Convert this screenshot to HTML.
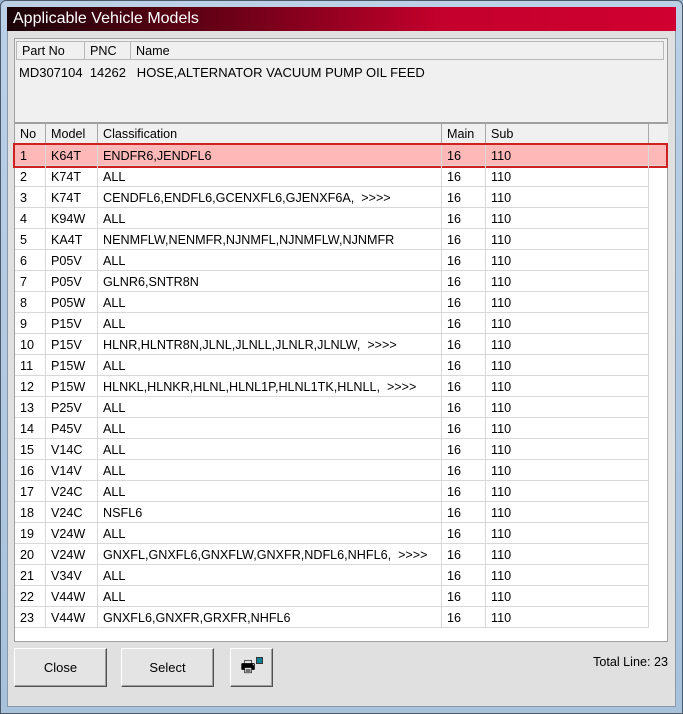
<!DOCTYPE html><html><head><style>
*{margin:0;padding:0;box-sizing:border-box}
body{width:683px;height:714px;background:#9fb8d2;position:relative;font-family:"Liberation Sans",sans-serif;font-size:12.6px;color:#000;overflow:hidden}
.frame{position:absolute;left:0;top:0;width:683px;height:714px;border-radius:6px 6px 0 0;background:linear-gradient(#bcd0e6,#a8c2dc);border:1px solid #4a5a6a}
.in{position:absolute;left:7px;top:30px;width:669px;height:677px;background:#e0e0e0;border:1px solid #8899aa}
.title{position:absolute;left:7px;top:7px;width:669px;height:24px;background:linear-gradient(90deg,#1a0508 0%,#700018 35%,#c4002c 65%,#d00030 100%);color:#fff;font-size:16px;padding:3px 6px}
.box1{position:absolute;left:14px;top:38px;width:654px;height:85px;background:#f0f0f0;border:1px solid #a0a0a0}
.h{position:absolute;top:2px;height:19px;background:#f0f0f0;border:1px solid #b8b8b8;border-left:none;padding:2px 5px}
.tbl{position:absolute;left:14px;top:123px;width:654px;height:519px;background:#fff;border:1px solid #a0a0a0}
.hr{position:absolute;top:0;height:21px;background:#f0f0f0;border-right:1px solid #a8a8a8;border-bottom:1px solid #a8a8a8;padding:3px 5px}
.row{position:absolute;left:0;width:633px;height:21px;border-bottom:1px solid #d8d8d8}
.row span{position:absolute;top:0;height:21px;padding:4px 5px;border-right:1px solid #d8d8d8;white-space:nowrap}
.sel{background:#ffb8b8;outline:2px solid #d02020;width:651px}
.btn{position:absolute;top:648px;height:39px;background:#e4e4e4;border:1px solid;border-color:#fff #505050 #505050 #fff;box-shadow:inset -1px -1px #a0a0a0;text-align:center;line-height:37px;font-size:13px}
</style></head><body>
<div class="frame"></div>
<div class="in"></div>
<div class="title">Applicable Vehicle Models</div>
<div class="box1">
<div class="h" style="left:1px;width:69px;border-left:1px solid #b8b8b8">Part No</div>
<div class="h" style="left:70px;width:46px">PNC</div>
<div class="h" style="left:116px;width:533px">Name</div>
<div style="position:absolute;top:26px;left:4px;font-size:13px">MD307104&nbsp;&nbsp;14262&nbsp;&nbsp;&nbsp;HOSE,ALTERNATOR VACUUM PUMP OIL FEED</div>
</div>
<div class="tbl">
<div class="hr" style="left:0;width:31px">No</div>
<div class="hr" style="left:31px;width:52px">Model</div>
<div class="hr" style="left:83px;width:344px">Classification</div>
<div class="hr" style="left:427px;width:44px">Main</div>
<div class="hr" style="left:471px;width:163px">Sub</div>
<div class="hr" style="left:634px;width:19px;border-right:none"></div>
<div id="rows"></div>
</div>
<div class="btn" style="left:14px;width:93px">Close</div>
<div class="btn" style="left:121px;width:93px">Select</div>
<div class="btn" style="left:230px;width:43px;font-size:16px">🖶<span style="display:inline-block;width:7px;height:7px;background:#0a8090;border:1px solid #333;vertical-align:8px"></span></div>
<div style="position:absolute;left:540px;top:655px;width:128px;text-align:right">Total Line: 23</div>
<script>
var d=[["K64T","ENDFR6,JENDFL6"],["K74T","ALL"],["K74T","CENDFL6,ENDFL6,GCENXFL6,GJENXF6A,&nbsp; &gt;&gt;&gt;&gt;"],["K94W","ALL"],["KA4T","NENMFLW,NENMFR,NJNMFL,NJNMFLW,NJNMFR"],["P05V","ALL"],["P05V","GLNR6,SNTR8N"],["P05W","ALL"],["P15V","ALL"],["P15V","HLNR,HLNTR8N,JLNL,JLNLL,JLNLR,JLNLW,&nbsp; &gt;&gt;&gt;&gt;"],["P15W","ALL"],["P15W","HLNKL,HLNKR,HLNL,HLNL1P,HLNL1TK,HLNLL,&nbsp; &gt;&gt;&gt;&gt;"],["P25V","ALL"],["P45V","ALL"],["V14C","ALL"],["V14V","ALL"],["V24C","ALL"],["V24C","NSFL6"],["V24W","ALL"],["V24W","GNXFL,GNXFL6,GNXFLW,GNXFR,NDFL6,NHFL6,&nbsp; &gt;&gt;&gt;&gt;"],["V34V","ALL"],["V44W","ALL"],["V44W","GNXFL6,GNXFR,GRXFR,NHFL6"]];
var h="";d.forEach(function(r,i){h+='<div class="row'+(i==0?' sel':'')+'" style="top:'+(21+i*21)+'px"><span style="left:0;width:31px">'+(i+1)+'</span><span style="left:31px;width:52px">'+r[0]+'</span><span style="left:83px;width:344px">'+r[1]+'</span><span style="left:427px;width:44px">16</span><span style="left:471px;width:163px">110</span></div>'});
document.getElementById("rows").innerHTML=h;
</script>
</body></html>
